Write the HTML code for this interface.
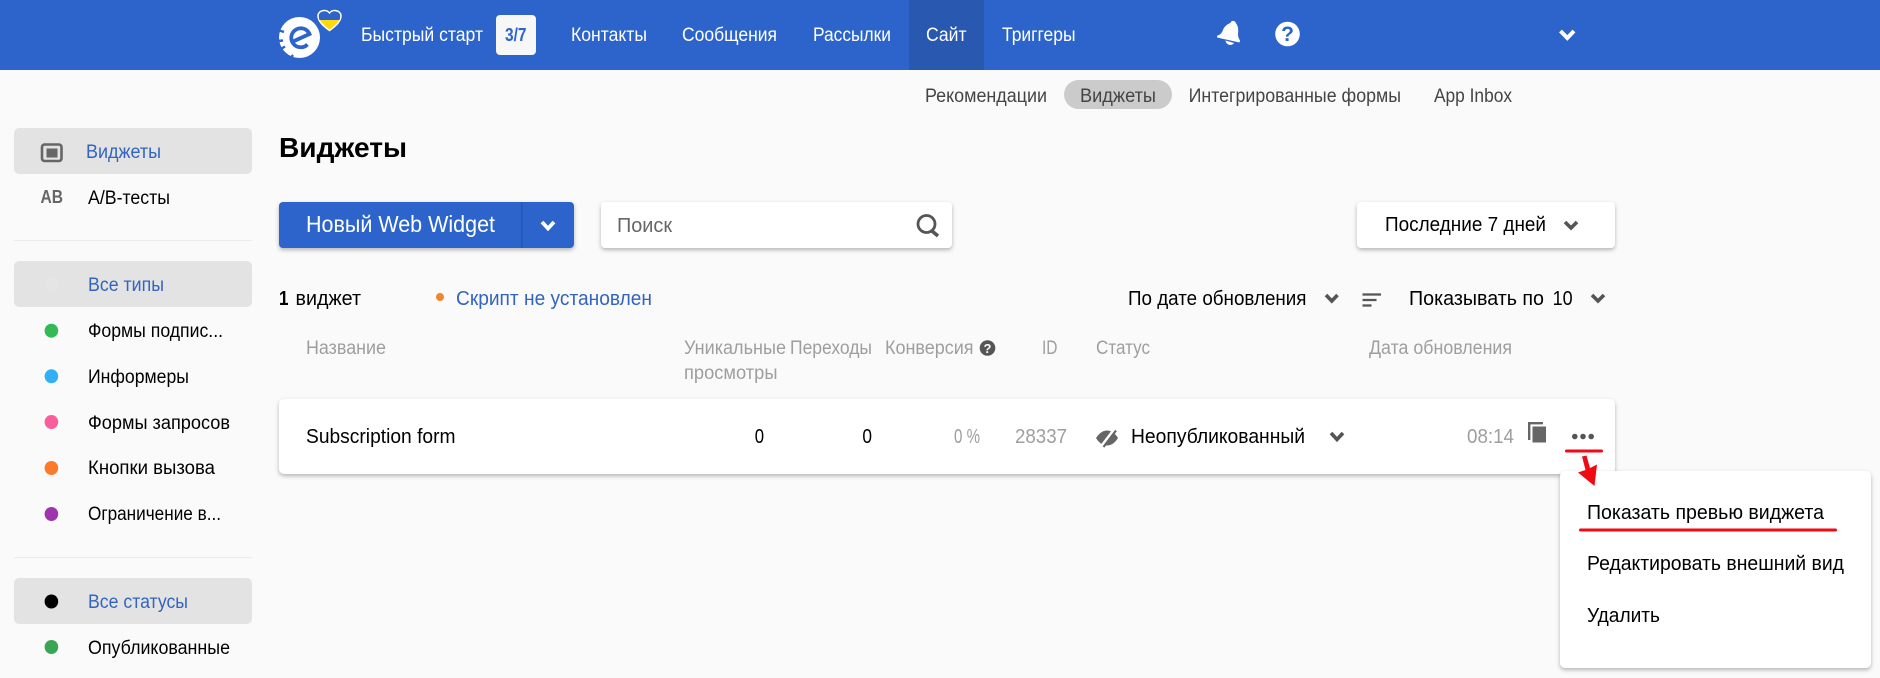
<!DOCTYPE html>
<html lang="ru"><head><meta charset="utf-8"><title>Виджеты</title>
<style>
html,body{margin:0;padding:0;width:1880px;height:678px;overflow:hidden;background:#fafafa}
svg{display:block}
text{font-family:"Liberation Sans",Arial,sans-serif;font-size:19px;fill:#000}
.nav{fill:#fff}
.sub{fill:#444}
.blue{fill:#3264c0}
.g{fill:#9e9e9e}
.l{font-size:20px}
.sh{filter:drop-shadow(0 2px 2px rgba(0,0,0,.28))}
.ch{fill:none;stroke:#555;stroke-width:3.6}
</style></head><body>
<svg xmlns="http://www.w3.org/2000/svg" width="1880" height="678" viewBox="0 0 1880 678">
<rect width="1880" height="678" fill="#fafafa"/>
<!-- header -->
<rect width="1880" height="70" fill="#2c64cb"/>
<rect x="909" width="75" height="70" fill="#2858b0"/>
<circle cx="299.5" cy="37.5" r="20.5" fill="#fff"/>
<path d="M293 41.500 L309.500 34 A9.500 9.500 0 1 0 307.500 44.500" fill="none" stroke="#2c64cb" stroke-width="3.800"/>
<path d="M278 30l6 2M278 41l5-.5M281 49l4-2.500M290 59l3-4" stroke="#2c64cb" stroke-width="2.400" fill="none"/>
<path d="M329.500 30.500 C324 26.500 318 21.500 318 16 C318 12.500 321 10.500 324.500 10.500 C326.800 10.500 328.500 11.700 329.500 13.300 C330.500 11.700 332.200 10.500 334.500 10.500 C338 10.500 341 12.500 341 16 C341 21.500 335 26.500 329.500 30.500Z" fill="#ffd90f" stroke="#fff" stroke-width="1.500"/>
<path d="M319.500 20 C319 18.700 318.800 17.400 318.800 16 C318.800 13 321.500 11.300 324.500 11.300 C326.800 11.300 328.500 12.500 329.500 14.300 C330.500 12.500 332.200 11.300 334.500 11.300 C337.500 11.300 340.200 13 340.200 16 C340.200 17.400 340 18.700 339.500 20Z" fill="#2c64cb"/>
<text class="nav" x="361" y="41" textLength="122" lengthAdjust="spacingAndGlyphs">Быстрый старт</text>
<rect x="496" y="15" width="40" height="40" rx="4" fill="#f7f7f7"/>
<text x="505" y="41" textLength="21.500" lengthAdjust="spacingAndGlyphs" font-weight="700" style="font-size:18px;font-weight:700;fill:#2c64cb">3/7</text>
<text class="nav" x="571" y="41" textLength="76" lengthAdjust="spacingAndGlyphs">Контакты</text>
<text class="nav" x="682" y="41" textLength="95" lengthAdjust="spacingAndGlyphs">Сообщения</text>
<text class="nav" x="813" y="41" textLength="78" lengthAdjust="spacingAndGlyphs">Рассылки</text>
<text class="nav" x="926" y="41" textLength="40.500" lengthAdjust="spacingAndGlyphs">Сайт</text>
<text class="nav" x="1002" y="41" textLength="73.500" lengthAdjust="spacingAndGlyphs">Триггеры</text>
<path d="M1232 21 C1234 20.500 1235.500 21.500 1235.800 23 C1238.500 26 1238.500 31 1238 34 C1238 37 1239 39 1240 40.500 L1239.500 42.500 L1217 37.500 L1217.300 35.500 C1220 35 1222 33 1223 30 C1224 27 1227 24 1230.500 23 C1230.800 22 1231 21.500 1232 21Z" fill="#fff"/>
<path d="M1225.500 40.500 C1226 45 1231.500 46.500 1234 43" fill="#fff"/>
<circle cx="1287.500" cy="34" r="12.300" fill="#fff"/>
<text x="1287.500" y="41" text-anchor="middle" style="font-size:21px;font-weight:700;fill:#2c64cb">?</text>
<path d="M1560.500 31 L1567.300 38 L1574 31" fill="none" stroke="#fff" stroke-width="4"/>
<!-- sub nav -->
<rect x="1064" y="80" width="108" height="29" rx="14.500" fill="#cbcbcb"/>
<text class="sub" x="925" y="102" textLength="122" lengthAdjust="spacingAndGlyphs">Рекомендации</text>
<text class="sub" x="1080" y="102" textLength="76" lengthAdjust="spacingAndGlyphs">Виджеты</text>
<text class="sub" x="1188.600" y="102" textLength="212.400" lengthAdjust="spacingAndGlyphs">Интегрированные формы</text>
<text class="sub" x="1434" y="102" textLength="78" lengthAdjust="spacingAndGlyphs">App Inbox</text>
<!-- sidebar -->
<rect x="14" y="128" width="238" height="46" rx="5" fill="#e3e3e3"/>
<rect x="42" y="144.500" width="19.500" height="16.500" rx="2.500" fill="none" stroke="#666" stroke-width="2.600"/>
<rect x="46.500" y="148.500" width="11" height="9" fill="#666"/>
<text class="blue" x="86" y="158" textLength="75" lengthAdjust="spacingAndGlyphs">Виджеты</text>
<text x="40.500" y="203" textLength="22.500" lengthAdjust="spacingAndGlyphs" style="font-size:18px;font-weight:700;fill:#666">AB</text>
<text x="88" y="204" textLength="82" lengthAdjust="spacingAndGlyphs">А/В-тесты</text>
<rect x="14" y="240" width="238" height="1" fill="#ececec"/>
<rect x="14" y="261" width="238" height="46" rx="5" fill="#e3e3e3"/>
<ellipse cx="51.400" cy="284.500" rx="6.500" ry="7" fill="#e5e5e5"/>
<text class="blue" x="88" y="291" textLength="76" lengthAdjust="spacingAndGlyphs">Все типы</text>
<ellipse cx="51.400" cy="330.700" rx="6.800" ry="7" fill="#34ba55"/>
<text x="88" y="337" textLength="135" lengthAdjust="spacingAndGlyphs">Формы подпис...</text>
<ellipse cx="51.400" cy="376.300" rx="6.800" ry="7" fill="#33b0f5"/>
<text x="88" y="383" textLength="101" lengthAdjust="spacingAndGlyphs">Информеры</text>
<ellipse cx="51.400" cy="422" rx="6.800" ry="7" fill="#f9609b"/>
<text x="88" y="429" textLength="142" lengthAdjust="spacingAndGlyphs">Формы запросов</text>
<ellipse cx="51.400" cy="468" rx="6.800" ry="7" fill="#fb7a2c"/>
<text x="88" y="474" textLength="127" lengthAdjust="spacingAndGlyphs">Кнопки вызова</text>
<ellipse cx="51.400" cy="514" rx="6.800" ry="7" fill="#a034b0"/>
<text x="88" y="520" textLength="133" lengthAdjust="spacingAndGlyphs">Ограничение в...</text>
<rect x="14" y="557" width="238" height="1" fill="#ececec"/>
<rect x="14" y="578" width="238" height="46" rx="5" fill="#e3e3e3"/>
<ellipse cx="51.400" cy="601.500" rx="6.800" ry="7" fill="#000"/>
<text class="blue" x="88" y="608" textLength="100" lengthAdjust="spacingAndGlyphs">Все статусы</text>
<ellipse cx="51.400" cy="647" rx="6.800" ry="7" fill="#3aa655"/>
<text x="88" y="654" textLength="142" lengthAdjust="spacingAndGlyphs">Опубликованные</text>
<!-- title -->
<text x="279" y="157" textLength="128" lengthAdjust="spacingAndGlyphs" style="font-size:28px;font-weight:700">Виджеты</text>
<!-- toolbar -->
<g class="sh">
<rect x="279" y="202" width="295" height="46" rx="4" fill="#2c64cb"/>
<rect x="601" y="202" width="351" height="46" rx="4" fill="#fff"/>
<rect x="1357" y="202" width="258" height="46" rx="4" fill="#fff"/>
</g>
<rect x="521" y="202" width="1.500" height="46" fill="#2558b5"/>
<text x="306" y="232" textLength="189" lengthAdjust="spacingAndGlyphs" style="font-size:23px;fill:#fff">Новый Web Widget</text>
<path d="M542 222 L548 228.500 L554 222" fill="none" stroke="#fff" stroke-width="3.800"/>
<text x="617" y="232" textLength="55" lengthAdjust="spacingAndGlyphs" style="font-size:20px;fill:#666">Поиск</text>
<circle cx="926.500" cy="224" r="8.500" fill="none" stroke="#555" stroke-width="2.800"/>
<path d="M932 231 L938 236" stroke="#555" stroke-width="3.600" fill="none"/>
<text class="l" x="1385" y="231" textLength="161" lengthAdjust="spacingAndGlyphs">Последние 7 дней</text>
<path class="ch" d="M1565 222 L1571 228 L1577 222"/>
<!-- list meta -->
<text x="279" y="305" textLength="9.500" lengthAdjust="spacingAndGlyphs" style="font-size:20px;font-weight:700">1</text>
<text class="l" x="295.500" y="305" textLength="65.500" lengthAdjust="spacingAndGlyphs">виджет</text>
<circle cx="440" cy="297" r="4" fill="#f0872f"/>
<text class="l blue" x="456" y="305" textLength="196" lengthAdjust="spacingAndGlyphs">Скрипт не установлен</text>
<text class="l" x="1128" y="305" textLength="178.500" lengthAdjust="spacingAndGlyphs">По дате обновления</text>
<path class="ch" d="M1326 295 L1331.800 301 L1337.500 295"/>
<path d="M1362.500 294.500h18.500M1362.500 300h14M1362.500 305.500h9" stroke="#555" stroke-width="2.200" fill="none"/>
<text class="l" x="1409" y="305" textLength="135" lengthAdjust="spacingAndGlyphs">Показывать по</text>
<text class="l" x="1552.600" y="305" textLength="20" lengthAdjust="spacingAndGlyphs">10</text>
<path class="ch" d="M1592 295 L1598 301 L1604 295"/>
<!-- table head -->
<text class="g" x="306" y="354" textLength="80" lengthAdjust="spacingAndGlyphs">Название</text>
<text class="g" x="684" y="354" textLength="102" lengthAdjust="spacingAndGlyphs">Уникальные</text>
<text class="g" x="684" y="379" textLength="93.500" lengthAdjust="spacingAndGlyphs">просмотры</text>
<text class="g" x="790" y="354" textLength="82" lengthAdjust="spacingAndGlyphs">Переходы</text>
<text class="g" x="885" y="354" textLength="88.500" lengthAdjust="spacingAndGlyphs">Конверсия</text>
<circle cx="987.500" cy="348" r="7.800" fill="#555"/>
<text x="987.500" y="353" text-anchor="middle" style="font-size:13px;font-weight:700;fill:#fafafa">?</text>
<text class="g" x="1042" y="354" textLength="15.500" lengthAdjust="spacingAndGlyphs">ID</text>
<text class="g" x="1096" y="354" textLength="54" lengthAdjust="spacingAndGlyphs">Статус</text>
<text class="g" x="1369" y="354" textLength="143" lengthAdjust="spacingAndGlyphs">Дата обновления</text>
<!-- card -->
<rect class="sh" x="279" y="399" width="1336" height="75" rx="5" fill="#fff"/>
<text class="l" x="306" y="443" textLength="149.500" lengthAdjust="spacingAndGlyphs">Subscription form</text>
<text class="l" x="754.700" y="443" textLength="9.300" lengthAdjust="spacingAndGlyphs">0</text>
<text class="l" x="862.400" y="443" textLength="9.600" lengthAdjust="spacingAndGlyphs">0</text>
<text class="l g" x="954" y="443" textLength="26" lengthAdjust="spacingAndGlyphs">0 %</text>
<text class="l g" x="1015" y="443" textLength="52" lengthAdjust="spacingAndGlyphs">28337</text>
<path d="M1096 438 C1100 432 1104 430.500 1107 430.500 C1111 430.500 1115 433 1118 438 C1115 443 1111 445.500 1107 445.500 C1103 445.500 1099 443 1096 438Z" fill="#666"/>
<path d="M1101 446.500 L1114 429.500" stroke="#fff" stroke-width="2.600" fill="none"/>
<path d="M1103.500 447 L1116 430.500" stroke="#666" stroke-width="2.200" fill="none"/>
<text class="l" x="1131" y="443" textLength="174" lengthAdjust="spacingAndGlyphs">Неопубликованный</text>
<path class="ch" d="M1331 433 L1337 439.500 L1343 433"/>
<text class="l g" x="1467" y="443" textLength="47" lengthAdjust="spacingAndGlyphs">08:14</text>
<path d="M1529.200 440 V423.200 H1543" fill="none" stroke="#666" stroke-width="2.400"/>
<rect x="1532.500" y="426.500" width="13.500" height="16" fill="#666"/>
<circle cx="1574.800" cy="436.500" r="2.800" fill="#555"/><circle cx="1583" cy="436.500" r="2.800" fill="#555"/><circle cx="1591.200" cy="436.500" r="2.800" fill="#555"/>
<!-- dropdown -->
<rect class="sh" x="1560" y="471" width="311" height="197" rx="5" fill="#fff"/>
<text class="l" x="1587" y="519" textLength="237" lengthAdjust="spacingAndGlyphs">Показать превью виджета</text>
<text class="l" x="1587" y="570" textLength="257" lengthAdjust="spacingAndGlyphs">Редактировать внешний вид</text>
<text class="l" x="1587" y="622" textLength="73" lengthAdjust="spacingAndGlyphs">Удалить</text>
<!-- annotations -->
<rect x="1565" y="449.500" width="38" height="3" rx="1.500" fill="#f00a14"/>
<rect x="1579" y="528.500" width="258" height="3" rx="1.500" fill="#f00a14"/>
<path d="M1582 456.500 L1586.500 455.500 L1590 468 L1597 464.500 L1594.500 486 L1578 472.500 L1585.500 470Z" fill="#f00a14"/>
</svg>
</body></html>
